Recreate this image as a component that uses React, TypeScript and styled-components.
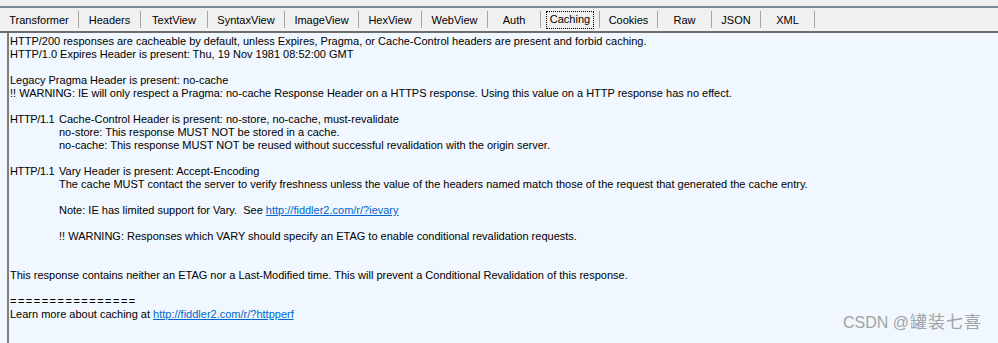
import React from "react";
import styled, { createGlobalStyle } from "styled-components";

const Global = createGlobalStyle`
  html, body { margin: 0; padding: 0; }
  body {
    background: #f0f7fe;
    font-family: "Liberation Sans", Arial, sans-serif;
    font-size: 11px;
    color: #000;
  }
`;

const Page = styled.div`
  position: relative;
  width: 998px;
  height: 343px;
  display: flex;
  flex-direction: column;
  overflow: hidden;
`;

const TopStrip = styled.div`
  height: 6px;
  background: #f0f0f0;
  border-bottom: 2px solid #7b8b9a;
`;

const TabBar = styled.div`
  height: 23px;
  background: #f0f0f0;
  display: flex;
  align-items: center;
  border-bottom: 2px solid #6e6e6e;
`;

const Tab = styled.div<{ $w: number }>`
  width: ${(p) => p.$w}px;
  height: 17px;
  box-sizing: border-box;
  border-right: 1px solid #a6a6a6;
  display: flex;
  align-items: center;
  justify-content: center;
  font-size: 11px;
  color: #000;
  flex: none;
`;

const Focus = styled.span`
  outline: 1px dotted #000;
  outline-offset: 0;
  padding: 1px 3px 2px;
  line-height: 13px;
`;

const Body = styled.div`
  flex: 1;
  display: flex;
  padding-left: 7px;
`;

const Box = styled.div`
  flex: 1;
  border-left: 2px solid #7f7f7f;
  background: #f0f7fe;
  padding: 2px 0 0 1px;
  line-height: 13px;
  font-size: 11px;
`;

const Line = styled.div<{ $indent?: boolean; $wide?: boolean }>`
  height: 13px;
  white-space: pre;
  padding-left: ${(p) => (p.$indent ? "49px" : "0")};
  letter-spacing: ${(p) => (p.$wide ? "1.5px" : "normal")};
`;

const Labeled = styled.div`
  display: grid;
  grid-template-columns: 49px auto;
  height: 13px;
  white-space: pre;
`;

const Label = styled.span`
  letter-spacing: -0.35px;
`;

const Link = styled.a`
  color: #0066cc;
  text-decoration: underline;
`;

const Watermark = styled.div`
  position: absolute;
  right: 16px;
  bottom: 11px;
  font-family: "Liberation Sans", "Noto Sans CJK SC", sans-serif;
  font-size: 16px;
  line-height: 19px;
  color: #a3a3a3;
  white-space: nowrap;
`;

const Cjk = styled.span`
  font-family: "Noto Sans CJK SC", sans-serif;
  font-size: 17px;
  letter-spacing: 1px;
  margin-left: 1px;
`;

const tabs: [string, number][] = [
  ["Transformer", 79],
  ["Headers", 62],
  ["TextView", 67],
  ["SyntaxView", 77],
  ["ImageView", 74],
  ["HexView", 63],
  ["WebView", 66],
  ["Auth", 53],
  ["Caching", 59],
  ["Cookies", 58],
  ["Raw", 54],
  ["JSON", 49],
  ["XML", 54],
];

export default function App() {
  return (
    <Page>
      <Global />
      <TopStrip />
      <TabBar>
        {tabs.map(([name, w]) => (
          <Tab key={name} $w={w}>
            {name === "Caching" ? <Focus>{name}</Focus> : name}
          </Tab>
        ))}
      </TabBar>
      <Body>
        <Box>
          <Line>HTTP/200 responses are cacheable by default, unless Expires, Pragma, or Cache-Control headers are present and forbid caching.</Line>
          <Line>HTTP/1.0 Expires Header is present: Thu, 19 Nov 1981 08:52:00 GMT</Line>
          <Line />
          <Line>Legacy Pragma Header is present: no-cache</Line>
          <Line>!! WARNING: IE will only respect a Pragma: no-cache Response Header on a HTTPS response. Using this value on a HTTP response has no effect.</Line>
          <Line />
          <Labeled>
            <Label>HTTP/1.1</Label>
            <span>Cache-Control Header is present: no-store, no-cache, must-revalidate</span>
          </Labeled>
          <Line $indent>no-store: This response MUST NOT be stored in a cache.</Line>
          <Line $indent>no-cache: This response MUST NOT be reused without successful revalidation with the origin server.</Line>
          <Line />
          <Labeled>
            <Label>HTTP/1.1</Label>
            <span>Vary Header is present: Accept-Encoding</span>
          </Labeled>
          <Line $indent>The cache MUST contact the server to verify freshness unless the value of the headers named match those of the request that generated the cache entry.</Line>
          <Line />
          <Line $indent>
            {"Note: IE has limited support for Vary.  See "}
            <Link href="#">http://fiddler2.com/r/?ievary</Link>
          </Line>
          <Line />
          <Line $indent>!! WARNING: Responses which VARY should specify an ETAG to enable conditional revalidation requests.</Line>
          <Line />
          <Line />
          <Line>This response contains neither an ETAG nor a Last-Modified time. This will prevent a Conditional Revalidation of this response.</Line>
          <Line />
          <Line $wide>================</Line>
          <Line>
            {"Learn more about caching at "}
            <Link href="#">http://fiddler2.com/r/?httpperf</Link>
          </Line>
        </Box>
      </Body>
      <Watermark>
        CSDN @<Cjk>罐装七喜</Cjk>
      </Watermark>
    </Page>
  );
}
